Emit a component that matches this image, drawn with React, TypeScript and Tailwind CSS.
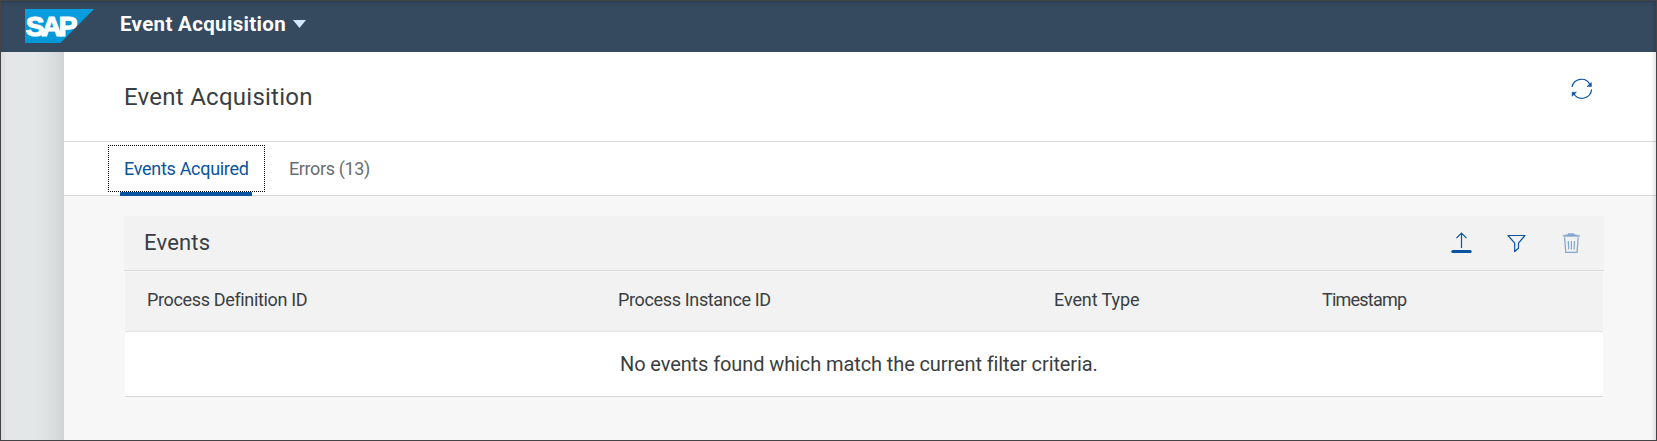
import React from "react";

const columns = [
  { label: "Process Definition ID", className: "w-[471px] tracking-[-0.35px]" },
  { label: "Process Instance ID", className: "w-[436px] tracking-[-0.35px]" },
  { label: "Event Type", className: "w-[268px] tracking-[-0.1px]" },
  { label: "Timestamp", className: "tracking-[-0.78px]" },
];

function SapLogo() {
  return (
    <svg className="h-[34px] w-[69px]" viewBox="0 0 69 34" aria-label="SAP">
      <defs>
        <linearGradient id="sap" x1="0" y1="0" x2="0" y2="1">
          <stop offset="0" stopColor="#0a9de0" />
          <stop offset="1" stopColor="#0098d8" />
        </linearGradient>
      </defs>
      <path d="M0 0H69L35.500 34H0Z" fill="url(#sap)" />
      <text
        x="0.800"
        y="27"
        letterSpacing="-3"
        fontFamily="Liberation Sans, sans-serif"
        fontWeight="700"
        fontSize="28"
        fill="#fff"
        stroke="#fff"
        strokeWidth="1.2"
      >
        SAP
      </text>
    </svg>
  );
}

function RefreshIcon() {
  return (
    <svg className="h-[22px] w-[22px]" viewBox="0 0 22 22" fill="none" stroke="#0854a0" strokeWidth="1.2">
      <path d="M1 9A9.600 9.600 0 0 1 18.900 6.400M20.600 11.500A9.700 9.700 0 0 1 2.900 16" />
      <path d="M20.400 4.400V8.600H16ZM1.100 18.300V14.200H5.500Z" fill="#0854a0" strokeWidth="0.5" />
    </svg>
  );
}

function UploadIcon() {
  return (
    <svg className="h-[22px] w-[22px]" viewBox="0 0 22 22" fill="none" stroke="#0854a0">
      <path d="M10.500 16V1.500M5.500 6.200L10.500 1.200L15.500 6.200" strokeWidth="1.2" />
      <path d="M1.800 19.500H19.200" strokeWidth="3" strokeLinecap="round" />
    </svg>
  );
}

function FilterIcon() {
  return (
    <svg className="h-[22px] w-[20px]" viewBox="0 0 20 22" fill="none" stroke="#0854a0" strokeWidth="1.2">
      <path d="M1 3.500H18L11.500 11.200V16.200L7.700 19.500V11.200Z" strokeLinejoin="round" />
    </svg>
  );
}

function TrashIcon() {
  return (
    <svg className="h-[22px] w-[20px]" viewBox="0 0 20 22" fill="none" stroke="#84a9cf">
      <path d="M1 4.600V3.400L6 2.400V1.600H12V2.400L17.500 3.400V4.600Z" fill="#84a9cf" strokeWidth="0.4" />
      <path d="M2.600 5.500L3.800 20.400H15L16.200 5.500" strokeWidth="1.300" />
      <path d="M6.300 9L6.700 17.500M9.400 9V17.500M12.500 9L12.100 17.500" strokeWidth="1.200" />
    </svg>
  );
}

export default function App() {
  return (
    <div className="relative flex h-[441px] w-[1657px] flex-col overflow-hidden border border-[#444446] bg-[#f7f7f7] font-['Roboto',sans-serif] text-[#3a3e42]">
      <header className="flex h-[51px] shrink-0 items-start bg-[#354a5f] pl-[24px] pt-[8px] shadow-[inset_0_3px_4px_-1px_#2e4053]">
        <SapLogo />
        <div className="ml-[26px] flex items-center pt-[1px]">
          <span className="text-[20.5px] leading-[28px] font-bold tracking-[0.33px] whitespace-nowrap text-white">Event Acquisition</span>
          <svg className="ml-[7px] h-[8px] w-[13px]" viewBox="0 0 13 8">
            <path d="M0 0H13L6.500 8Z" fill="#d1e8ff" />
          </svg>
        </div>
      </header>
      <div className="flex min-h-0 flex-1">
        <aside className="w-[63px] shrink-0 bg-[linear-gradient(90deg,#d9dcdc_0px,#e3e7e8_6px,#e3e7e8_34px,#dbdfe0_50px,#d0d4d5_63px)]" />
        <main className="flex flex-1 flex-col">
          <div className="flex h-[90px] items-start justify-between border-b border-[#d9d9d9] bg-white pr-[63px] pl-[60px]">
            <h1 className="pt-[29px] text-[24px] leading-[32px] tracking-[0.26px] whitespace-nowrap">Event Acquisition</h1>
            <button className="mt-[26px]" aria-label="Refresh"><RefreshIcon /></button>
          </div>
          <nav className="flex h-[54px] items-start border-b border-[#d9d9d9] bg-white pl-[44px]">
            <button className="relative mt-[3px] flex h-[47px] w-[157px] items-center border border-dotted border-black pb-[1px] pl-[15px] text-[18px] tracking-[-0.3px] whitespace-nowrap text-[#0854a0]">
              Events Acquired
              <span className="absolute top-[46px] left-[11px] h-[4px] w-[132px] rounded-t-[1px] bg-[#0854a0]" />
            </button>
            <button className="mt-[3px] ml-[24px] flex h-[46px] items-center text-[18px] tracking-[-0.38px] whitespace-nowrap text-[#6a6d70]">
              Errors (13)
            </button>
          </nav>
          <section className="mt-[20px] ml-[60px] w-[1480px]">
            <div className="flex h-[55px] items-center justify-between border-b border-[#d9d9d9] bg-[#f2f2f2] pr-[22px] pl-[20px]">
              <h2 className="pb-[2px] text-[22px] tracking-[0.2px] whitespace-nowrap">Events</h2>
              <div className="flex items-center">
                <button aria-label="Upload"><UploadIcon /></button>
                <button className="ml-[34px]" aria-label="Filter"><FilterIcon /></button>
                <button className="ml-[35px]" aria-label="Delete"><TrashIcon /></button>
              </div>
            </div>
            <div className="mx-[1px] mt-[1px]">
              <div className="flex h-[60px] items-center border-b border-[#e4e4e4] bg-[#f2f2f2] pb-[4px] pl-[22px] text-[18px]">
                {columns.map((c) => (
                  <div key={c.label} className={c.className}>{c.label}</div>
                ))}
              </div>
              <div className="flex h-[65px] items-center border-b border-[#d9d9d9] bg-white pl-[495px] text-[20px] tracking-[-0.1px] whitespace-nowrap">
                No events found which match the current filter criteria.
              </div>
            </div>
          </section>
        </main>
      </div>
      <div className="pointer-events-none absolute inset-y-0 right-0 w-[5px] bg-gradient-to-l from-black/10 to-transparent" />
    </div>
  );
}
